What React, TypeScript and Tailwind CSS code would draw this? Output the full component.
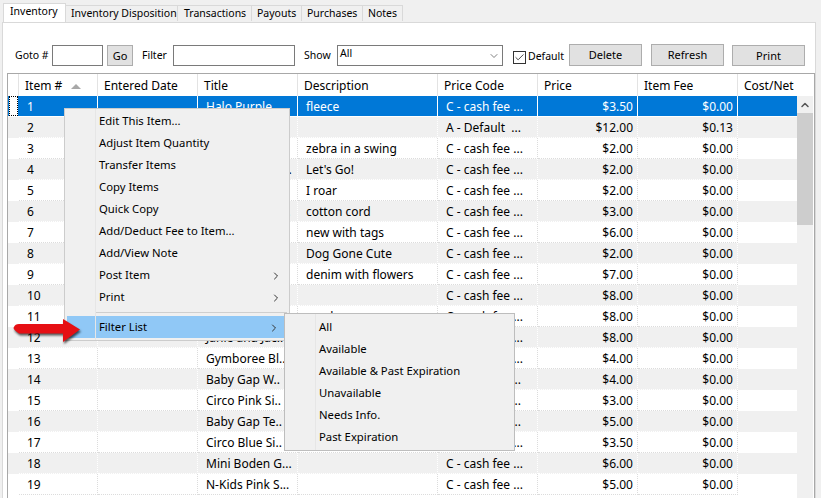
import React from 'react';
import { ChevronRight, ChevronDown, ChevronUp, Check } from 'lucide-react';

interface Row {
  id: number;
  title: string;
  desc: string;
  code: string;
  price: string;
  fee: string;
}

const C = 'C - cash fee ...';
const A = 'A - Default  ...';

const rows: Row[] = [
  { id: 1, title: 'Halo Purple', desc: 'fleece', code: C, price: '$3.50', fee: '$0.00' },
  { id: 2, title: '', desc: '', code: A, price: '$12.00', fee: '$0.13' },
  { id: 3, title: '', desc: 'zebra in a swing', code: C, price: '$2.00', fee: '$0.00' },
  { id: 4, title: 'Mini Boden G...', desc: "Let's Go!", code: C, price: '$2.00', fee: '$0.00' },
  { id: 5, title: 'Mini Boden L...', desc: 'I roar', code: C, price: '$2.00', fee: '$0.00' },
  { id: 6, title: 'Mini Boden C...', desc: 'cotton cord', code: C, price: '$3.00', fee: '$0.00' },
  { id: 7, title: 'N-Kids Blue S...', desc: 'new with tags', code: C, price: '$6.00', fee: '$0.00' },
  { id: 8, title: 'N-Kids Dog S...', desc: 'Dog Gone Cute', code: C, price: '$2.00', fee: '$0.00' },
  { id: 9, title: 'N-Kids Jean S...', desc: 'denim with flowers', code: C, price: '$7.00', fee: '$0.00' },
  { id: 10, title: '', desc: '', code: C, price: '$8.00', fee: '$0.00' },
  { id: 11, title: '', desc: 'used', code: C, price: '$8.00', fee: '$0.00' },
  { id: 12, title: 'Janie and Jac..', desc: '', code: C, price: '$8.00', fee: '$0.00' },
  { id: 13, title: 'Gymboree Bl..', desc: '', code: C, price: '$4.00', fee: '$0.00' },
  { id: 14, title: 'Baby Gap W..', desc: '', code: A, price: '$4.00', fee: '$0.00' },
  { id: 15, title: 'Circo Pink Si..', desc: '', code: A, price: '$3.00', fee: '$0.00' },
  { id: 16, title: 'Baby Gap Te..', desc: '', code: A, price: '$5.00', fee: '$0.00' },
  { id: 17, title: 'Circo Blue Si..', desc: '', code: C, price: '$3.50', fee: '$0.00' },
  { id: 18, title: 'Mini Boden G...', desc: '', code: C, price: '$6.00', fee: '$0.00' },
  { id: 19, title: 'N-Kids Pink S...', desc: '', code: C, price: '$5.00', fee: '$0.00' },
];

const tabs = [
  { label: 'Inventory Disposition', cls: 'w-[112px] pl-[5px]' },
  { label: 'Transactions', cls: 'w-[74px] pl-[6px]' },
  { label: 'Payouts', cls: 'w-[50px] pl-[5px]' },
  { label: 'Purchases', cls: 'w-[61px] pl-[5px]' },
  { label: 'Notes', cls: 'w-[40px] pl-[5px]' },
];

const menuItems = ['Edit This Item...', 'Adjust Item Quantity', 'Transfer Items', 'Copy Items', 'Quick Copy', 'Add/Deduct Fee to Item...', 'Add/View Note'];
const filterItems = ['All', 'Available', 'Available & Past Expiration', 'Unavailable', 'Needs Info.', 'Past Expiration'];

function HeaderCell({ label, width, children }: { label: string; width: string; children?: React.ReactNode }) {
  return (
    <div className={`${width} h-full flex items-center pl-[6px] pt-[2px] border-r border-[#e3e3e3] shrink-0`}>
      <span>{label}</span>
      {children}
    </div>
  );
}

function GridRow({ row }: { row: Row }) {
  const selected = row.id === 1;
  const even = row.id % 2 === 0;
  const cell = selected
    ? 'border-r border-white'
    : even
      ? 'border-r border-b border-dotted border-white'
      : 'border-r border-b border-dotted border-[#dcdcdc]';
  return (
    <div className={`flex shrink-0 ${selected ? 'bg-[#0078d7] text-white h-[20px] mb-px' : even ? 'h-[21px] bg-[#f0f0f0]' : 'h-[21px] bg-white'}`}>
      <div className="w-[11px] shrink-0 relative">
        {selected && <div className="absolute inset-x-[1px] inset-y-0 bg-white border border-dotted border-black" />}
      </div>
      <div className={`w-[79px] shrink-0 pl-[8px] leading-[22px] ${cell}`}>{row.id}</div>
      <div className={`w-[100px] shrink-0 ${cell}`} />
      <div className={`w-[100px] shrink-0 pl-[8px] leading-[22px] whitespace-nowrap overflow-hidden ${cell}`}>{row.title}</div>
      <div className={`w-[140px] shrink-0 pl-[8px] leading-[22px] whitespace-pre overflow-hidden ${cell}`}>{row.desc}</div>
      <div className={`w-[100px] shrink-0 pl-[8px] leading-[22px] whitespace-pre overflow-hidden ${cell}`}>{row.code}</div>
      <div className={`w-[100px] shrink-0 pr-[4px] text-right leading-[22px] ${cell}`}>{row.price}</div>
      <div className={`w-[100px] shrink-0 pr-[4px] text-right leading-[22px] ${cell}`}>{row.fee}</div>
      <div className="w-[58px] shrink-0" />
    </div>
  );
}

function MenuRow({ label, arrow, inset }: { label: string; arrow?: boolean; inset: string }) {
  return (
    <div className={`h-[22px] flex items-center pt-px pr-[5px] justify-between ${inset}`}>
      <span>{label}</span>
      {arrow && <ChevronRight className="w-[12px] h-[12px] text-[#333]" strokeWidth={2} />}
    </div>
  );
}

export default function App() {
  return (
    <div className="relative w-[821px] h-[498px] overflow-hidden bg-[#f0f0f0] text-black text-[12px] font-['Noto_Sans',sans-serif]">
      {/* Tab strip */}
      <div className="h-[22px] pl-[3px] flex items-end relative z-10 text-[10.5px]">
        <div className="w-[63px] h-[19px] bg-white border border-b-0 border-[#d9d9d9] pl-[6px] leading-[15px] shrink-0">Inventory</div>
        {tabs.map((t) => (
          <div key={t.label} className={`${t.cls} h-[16px] mb-px leading-[15px] whitespace-nowrap bg-[#f0f0f0] border border-l-0 border-b-0 border-[#d9d9d9] shrink-0`}>{t.label}</div>
        ))}
      </div>

      {/* Tab panel */}
      <div className="ml-[2px] w-[814px] h-[476px] bg-white border border-[#d9d9d9] border-b-0">
        {/* Toolbar */}
        <div className="h-[50px] flex items-end pb-[7px] pl-[12px] text-[10.5px] whitespace-nowrap">
          <span className="w-[37px] leading-[21px]">Goto #</span>
          <div className="w-[51px] h-[21px] border border-[#7a7a7a] bg-white" />
          <div className="ml-[4px] w-[26px] h-[21px] bg-[#e1e1e1] border border-[#adadad] text-center leading-[19px] text-[11px]">Go</div>
          <span className="ml-[9px] w-[31px] leading-[21px]">Filter</span>
          <div className="w-[122px] h-[21px] border border-[#7a7a7a] bg-white" />
          <span className="ml-[9px] w-[33px] leading-[21px]">Show</span>
          <div className="w-[166px] h-[21px] border border-[#7a7a7a] bg-white flex items-center justify-between pl-[2px] pr-[2px]">
            <span className="-mt-[3px]">All</span>
            <ChevronDown className="w-[12px] h-[12px] text-[#555]" strokeWidth={1.5} />
          </div>
          <div className="ml-[10px] mb-[2px] w-[13px] h-[13px] border border-[#333] bg-white flex items-center justify-center">
            <Check className="w-[11px] h-[11px] text-[#222]" strokeWidth={1.75} />
          </div>
          <span className="ml-[2px] w-[41px] leading-[20px]">Default</span>
          <div className="w-[73px] h-[22px] bg-[#e1e1e1] border border-[#adadad] text-center leading-[20px] text-[11px]">Delete</div>
          <div className="ml-[9px] w-[73px] h-[22px] bg-[#e1e1e1] border border-[#adadad] text-center leading-[20px] text-[11px]">Refresh</div>
          <div className="ml-[8px] w-[73px] h-[21px] bg-[#e1e1e1] border border-[#adadad] text-center leading-[19px] text-[11px]">Print</div>
        </div>

        {/* Grid */}
        <div className="ml-[4px] w-[808px] h-[425px] border border-[#a8a8a8] border-b-0 bg-white">
          <div className="h-[22px] flex items-center">
            <div className="w-[11px] shrink-0 h-full border-r border-[#e3e3e3]" />
            <HeaderCell label="Item #" width="w-[79px]">
              <div className="ml-[9px] w-0 h-0 border-x-[5px] border-x-transparent border-b-[5px] border-b-[#a8a8a8]" />
            </HeaderCell>
            <HeaderCell label="Entered Date" width="w-[100px]" />
            <HeaderCell label="Title" width="w-[100px]" />
            <HeaderCell label="Description" width="w-[140px]" />
            <HeaderCell label="Price Code" width="w-[100px]" />
            <HeaderCell label="Price" width="w-[100px]" />
            <HeaderCell label="Item Fee" width="w-[100px]" />
            <div className="pl-[6px] pt-[2px]">Cost/Net</div>
          </div>
          <div className="flex h-[403px]">
            <div className="w-[789px] flex flex-col overflow-hidden shrink-0">
              {rows.map((r) => <GridRow key={r.id} row={r} />)}
            </div>
            <div className="w-[16px] bg-[#f0f0f0] flex flex-col shrink-0">
              <div className="h-[17px] flex items-center justify-center">
                <ChevronUp className="w-[12px] h-[12px] text-[#555]" strokeWidth={3} />
              </div>
              <div className="h-[112px] bg-[#cdcdcd]" />
            </div>
          </div>
        </div>
      </div>

      {/* Context menu */}
      <div className="absolute left-[64px] top-[108px] w-[226px] h-[233px] bg-[#f0f0f0] border border-[#cccccc] py-px px-[2px] z-20 text-[11.3px]">
        <div className="absolute left-[30px] top-0 bottom-0 border-l border-[#e6e6e6]" />
        {menuItems.map((m) => <MenuRow key={m} label={m} inset="pl-[32px]" />)}
        <MenuRow label="Post Item" arrow inset="pl-[32px]" />
        <MenuRow label="Print" arrow inset="pl-[32px]" />
        <div className="h-[8px] flex items-center pl-[28px]"><div className="w-full border-t border-[#cfcfcf]" /></div>
        <div className="bg-[#90c8f6] w-[218px]"><MenuRow label="Filter List" arrow inset="pl-[32px]" /></div>
      </div>

      {/* Filter submenu */}
      <div className="absolute left-[284px] top-[313px] w-[231px] h-[138px] bg-[#f0f0f0] border border-[#bdbdbd] py-[2px] z-30 text-[11.3px]">
        <div className="absolute left-[30px] top-0 bottom-0 border-l border-[#e6e6e6]" />
        {filterItems.map((m) => <MenuRow key={m} label={m} inset="pl-[34px]" />)}
      </div>

      {/* Callout arrow */}
      <svg className="absolute left-[10px] top-[312px] z-40 drop-shadow-[1px_2px_1px_rgba(0,0,0,0.65)]" width="80" height="36" viewBox="0 0 80 36">
        <path d="M9 12 H53 L53 7 L70 17.5 L53 30 L53 21.5 H9 Q2 17 4 15 Q5 12 9 12 Z" fill="#e60f14" />
      </svg>
    </div>
  );
}
